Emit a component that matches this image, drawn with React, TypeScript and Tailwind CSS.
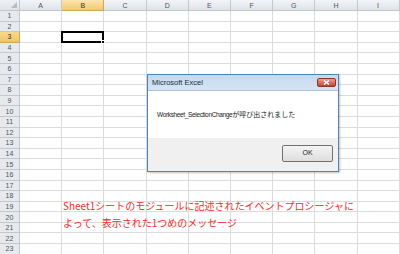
const COLS = ["A", "B", "C", "D", "E", "F", "G", "H", "I"];
const ROWS = Array.from({ length: 23 }, (_, i) => i + 1);

const uiFont = { fontFamily: '"Liberation Sans", "Noto Sans CJK JP", sans-serif' };

export default function App() {
  return (
    <div className="relative w-[400px] h-[254px] overflow-hidden bg-white" style={uiFont}>
      <div className="grid grid-cols-[20px_repeat(9,42.2px)] grid-rows-[11px_repeat(23,10.6px)]">
        {/* corner */}
        <div className="relative bg-gradient-to-b from-[#eef1f5] to-[#dfe3e8] border-r border-b border-[#c3c8cf]">
          <div className="absolute right-[2px] bottom-[2px] w-0 h-0 border-l-[6px] border-l-transparent border-b-[6px] border-b-[#b7bcc4]" />
        </div>
        {COLS.map((c) => (
          <div
            key={c}
            className={`flex items-center justify-center text-[7px] leading-none border-r border-b ${
              c === "B"
                ? "bg-gradient-to-b from-[#fbe6b0] to-[#f4c96a] border-[#c9a95a] text-[#333]"
                : "bg-gradient-to-b from-[#f2f4f7] to-[#dfe3e8] border-[#c3c8cf] text-[#4c5560]"
            }`}
          >
            {c}
          </div>
        ))}
        {ROWS.map((r) => (
          <Row key={r} r={r} />
        ))}
      </div>

      {/* dialog */}
      <div className="absolute left-[147px] top-[74px] w-[192px] h-[98px] flex flex-col border border-[#4b87b6] shadow-[1px_1px_2px_rgba(0,0,0,0.25)]">
        <div className="relative h-[16px] flex items-center pl-[4px] bg-gradient-to-b from-[#c4d9ef] to-[#d6e5f5] border-b border-[#a9c3df]">
          <span className="text-[7.5px] text-[#1c2b3a]">Microsoft Excel</span>
          <div className="absolute right-[2px] top-[3px] w-[19px] h-[9px] rounded-[2px] border border-[#8c3524] bg-gradient-to-b from-[#e9a08d] to-[#c5442d] flex items-center justify-center">
            <svg width="7" height="5" viewBox="0 0 7 5">
              <path d="M1 0.5 L6 4.5 M6 0.5 L1 4.5" stroke="#fff" strokeWidth="1.4" />
            </svg>
          </div>
        </div>
        <div className="h-[47px] bg-white flex items-center pl-[9px] text-[#222] whitespace-nowrap">
          <span className="text-[6.5px] tracking-[-0.35px]">Worksheet_SelectionChange</span>
          <span className="text-[7px]" style={{ fontFamily: '"Noto Sans CJK JP", sans-serif' }}>
            が呼び出されました
          </span>
        </div>
        <div className="flex-1 bg-[#f0f0f0] flex justify-end items-start pt-[7px] pr-[5px]">
          <div className="w-[51px] h-[17px] border border-[#707070] rounded-[2px] bg-gradient-to-b from-[#f4f4f4] to-[#dedede] flex items-center justify-center text-[7px] text-[#222]">
            OK
          </div>
        </div>
      </div>

      {/* annotation */}
      <div
        className="absolute left-[63px] top-[197px] text-[10px] leading-[17px] text-[#f42a2a] whitespace-nowrap"
        style={{ fontFamily: '"Noto Sans CJK JP", sans-serif' }}
      >
        <div>Sheet1シートのモジュールに記述されたイベントプロシージャに</div>
        <div>よって、表示された1つめのメッセージ</div>
      </div>
    </div>
  );
}

function Row({ r }: { r: number }) {
  const sel = r === 3;
  return (
    <>
      <div
        className={`flex items-center justify-center text-[7px] leading-none border-r border-b ${
          sel
            ? "bg-gradient-to-b from-[#f9d98e] to-[#f3c35f] border-[#c9a95a] text-[#333]"
            : "bg-[#e6eaef] border-[#c3c8cf] text-[#4c5560]"
        }`}
      >
        {r}
      </div>
      {COLS.map((c) => (
        <div key={c} className="relative border-r border-b border-[#dadcdd]">
          {sel && c === "B" && (
            <div className="absolute left-[-1px] top-[-1px] right-[-1px] bottom-[-1px] border-2 border-black z-10">
              <div className="absolute right-[-3px] bottom-[-3px] w-[4px] h-[4px] bg-black border border-white" />
            </div>
          )}
        </div>
      ))}
    </>
  );
}
